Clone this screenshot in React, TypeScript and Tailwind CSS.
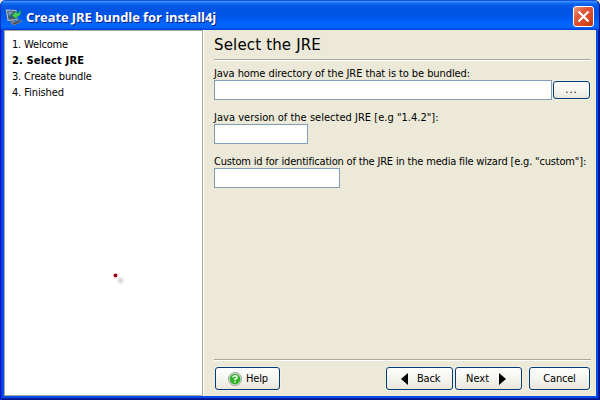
import type { ReactNode } from 'react';

const steps = [
  { label: '1. Welcome', cls: 'tracking-[-0.18px]' },
  { label: '2. Select JRE', cls: 'font-bold tracking-[0.15px]' },
  { label: '3. Create bundle', cls: 'tracking-[-0.18px]' },
  { label: '4. Finished', cls: 'tracking-[-0.1px]' },
];

function AppIcon() {
  return (
    <svg width="18" height="18" viewBox="0 0 18 18" className="shrink-0">
      <path d="M5 12h4v3H6z" fill="#6d767b" />
      <path d="M6.500 15.500l8-3.500 2 1.500-7.500 3.500z" fill="#3f4345" stroke="#8f9495" strokeWidth=".8" />
      <path d="M1.500 2l9.500.5 1 9-9 .8z" fill="#3d5a70" stroke="#b4bcc0" strokeWidth="1.200" />
      <path d="M3 3.500l6 .3-5 4.500z" fill="#6a9ab5" />
      <path d="M15.500 1.500q1.500 6-4 7.500v2L7 7.300l4.500-3.800v2q3.500 0 4-4z" fill="#45d45a" stroke="#169a32" strokeWidth=".6" />
    </svg>
  );
}

function Button({ className, children }: { className: string; children: ReactNode }) {
  return (
    <button
      type="button"
      className={`flex shrink-0 items-center rounded-[3px] border border-[#003c74] bg-gradient-to-b from-white via-[#f5f5f0] to-[#e9e6dd] shadow-[0_0_0_1px_#f1efe4] ${className}`}
    >
      {children}
    </button>
  );
}

function Field({ label, labelClass, inputClass, children }: { label: string; labelClass: string; inputClass: string; children?: ReactNode }) {
  return (
    <div className="mb-[10px]">
      <label className="block h-[14px] whitespace-nowrap leading-[16px]">
        <span className={labelClass}>{label}</span>
      </label>
      <div className="flex h-5 items-center gap-px">
        <input aria-label={label} className={`h-5 border border-[#7f9db9] bg-white outline-none ${inputClass}`} />
        {children}
      </div>
    </div>
  );
}

export default function App() {
  return (
    <div className="flex h-[400px] w-[600px] flex-col overflow-hidden bg-[#ece9d8] font-['DejaVu_Sans_Condensed','DejaVu_Sans',sans-serif] text-[11px] text-black">
      <header className="flex h-[30px] shrink-0 items-center rounded-t-[6px] bg-[linear-gradient(180deg,#0831d9_0%,#3a93ff_5%,#1470f5_10%,#0557e5_20%,#0054e3_40%,#0058ee_60%,#0066ff_80%,#0066fc_90%,#003dd7_100%)] pl-[5px] pr-[6px] pt-[3px] shadow-[inset_1px_0_#0a32c8,inset_-1px_0_#00138c]">
        <AppIcon />
        <h1 className="ml-[3px] grow whitespace-nowrap font-['Open_Sans','Noto_Sans',sans-serif] text-[13px] font-bold leading-[18px] tracking-[-0.08px] text-white [text-shadow:1px_1px_0_#0a1e8a]">
          Create JRE bundle for install4j
        </h1>
        <button
          type="button"
          aria-label="Close"
          className="flex size-[21px] items-center justify-center rounded-[3px] border border-white bg-[linear-gradient(135deg,#ed9b82_0%,#e0583a_35%,#d8451f_75%,#b23214_100%)]"
        >
          <svg width="13" height="13" viewBox="0 0 13 13">
            <path d="M1.500 1.500l10 10M11.500 1.500l-10 10" stroke="white" strokeWidth="2.200" />
          </svg>
        </button>
      </header>
      <div className="flex min-h-0 grow bg-[#0a4ae6] px-1 pb-1 shadow-[inset_1px_0_#0019cf,inset_2px_0_#0831d9,inset_-1px_0_#00138c,inset_-2px_0_#001ea0,inset_0_-1px_#00138c,inset_0_-2px_#001ea0]">
        <aside className="w-[199px] shrink-0 border border-[#aca899] bg-white pl-[7px] pt-[5px]">
          <ol>
            {steps.map((step) => (
              <li key={step.label} className="h-4 whitespace-nowrap leading-[18px]">
                <span className={step.cls}>{step.label}</span>
              </li>
            ))}
          </ol>
          <svg width="16" height="16" viewBox="0 0 16 16" className="ml-[99px] mt-[170px]">
            <defs>
              <radialGradient id="dotShadow">
                <stop offset="0" stopColor="#cfcfcf" />
                <stop offset="1" stopColor="#ffffff" />
              </radialGradient>
            </defs>
            <circle cx="9.500" cy="10.500" r="4.500" fill="url(#dotShadow)" />
            <circle cx="4.500" cy="5.500" r="2" fill="#a50010" />
          </svg>
        </aside>
        <main className="flex grow flex-col border-l border-white bg-[#ece9d8] pl-[10px] pr-[5px]">
          <h2 className="h-[29px] whitespace-nowrap pt-[5px] font-['DejaVu_Sans',sans-serif] text-[15px] leading-[20px]">
            <span className="tracking-[0.16px]">Select the JRE</span>
          </h2>
          <div className="h-[2px] shrink-0 border-t border-[#aca899] bg-white" />
          <form className="grow pt-[5px]">
            <Field label="Java home directory of the JRE that is to be bundled:" labelClass="tracking-[-0.08px]" inputClass="w-[338px]">
              <Button className="h-[18px] w-[37px] justify-center">
                <span className="pt-px tracking-[1px]">...</span>
              </Button>
            </Field>
            <Field label={'Java version of the selected JRE [e.g "1.4.2"]:'} labelClass="tracking-[0.02px]" inputClass="w-[94px]" />
            <Field label={'Custom id for identification of the JRE in the media file wizard [e.g. "custom"]:'} labelClass="tracking-[-0.18px]" inputClass="w-[126px]" />
          </form>
          <div className="h-[2px] shrink-0 border-t border-[#aca899] bg-white" />
          <footer className="flex h-[35px] shrink-0 pl-px pr-px pt-[6px]">
            <Button className="h-[23px] w-[65px] pl-[12px]">
              <svg width="14" height="14" viewBox="0 0 14 14" className="shrink-0">
                <circle cx="7" cy="7" r="6.500" fill="#d8ddd8" stroke="#8c9490" strokeWidth=".8" />
                <circle cx="7" cy="7" r="5.300" fill="#2fb525" />
                <path d="M5 5.500Q5 3.800 7 3.800T9 5.500Q9 6.500 7 7.300V8.300M7 9.300v1.300" fill="none" stroke="white" strokeWidth="1.500" />
              </svg>
              <span className="ml-[4px] pt-px tracking-[-0.2px]">Help</span>
            </Button>
            <Button className="ml-auto h-[23px] w-[67px] pl-[14px]">
              <svg width="7" height="12" viewBox="0 0 7 12" className="shrink-0"><path d="M7 0v12L0 6z" /></svg>
              <span className="ml-[9px] pt-px tracking-[-0.2px]">Back</span>
            </Button>
            <Button className="ml-[2px] h-[23px] w-[67px] pl-[10px]">
              <span className="w-[33px] pt-px text-left">Next</span>
              <svg width="7" height="12" viewBox="0 0 7 12" className="shrink-0"><path d="M0 0v12l7-6z" /></svg>
            </Button>
            <Button className="ml-[7px] h-[23px] w-[61px] justify-center">
              <span className="pt-px tracking-[-0.2px]">Cancel</span>
            </Button>
          </footer>
        </main>
      </div>
    </div>
  );
}
